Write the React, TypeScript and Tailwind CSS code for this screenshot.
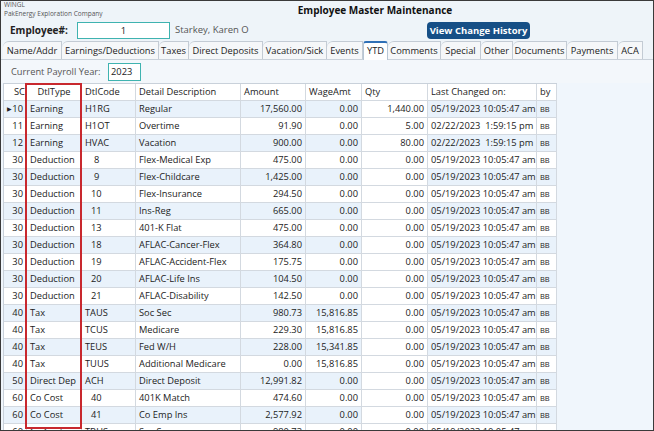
import React from "react";

type Row = {
  sc: string;
  type: string;
  code: string;
  num?: boolean;
  desc: string;
  amount: string;
  wage: string;
  qty: string;
  changed: string;
};

const d1 = "05/19/2023 10:05:47 am";
const d2 = "02/22/2023  1:59:15 pm";

const rows: Row[] = [
  { sc: "10", type: "Earning", code: "H1RG", desc: "Regular", amount: "17,560.00", wage: "0.00", qty: "1,440.00", changed: d1 },
  { sc: "11", type: "Earning", code: "H1OT", desc: "Overtime", amount: "91.90", wage: "0.00", qty: "5.00", changed: d2 },
  { sc: "12", type: "Earning", code: "HVAC", desc: "Vacation", amount: "900.00", wage: "0.00", qty: "80.00", changed: d2 },
  { sc: "30", type: "Deduction", code: "8", num: true, desc: "Flex-Medical Exp", amount: "475.00", wage: "0.00", qty: "0.00", changed: d1 },
  { sc: "30", type: "Deduction", code: "9", num: true, desc: "Flex-Childcare", amount: "1,425.00", wage: "0.00", qty: "0.00", changed: d1 },
  { sc: "30", type: "Deduction", code: "10", num: true, desc: "Flex-Insurance", amount: "294.50", wage: "0.00", qty: "0.00", changed: d1 },
  { sc: "30", type: "Deduction", code: "11", num: true, desc: "Ins-Reg", amount: "665.00", wage: "0.00", qty: "0.00", changed: d1 },
  { sc: "30", type: "Deduction", code: "13", num: true, desc: "401-K Flat", amount: "475.00", wage: "0.00", qty: "0.00", changed: d1 },
  { sc: "30", type: "Deduction", code: "18", num: true, desc: "AFLAC-Cancer-Flex", amount: "364.80", wage: "0.00", qty: "0.00", changed: d1 },
  { sc: "30", type: "Deduction", code: "19", num: true, desc: "AFLAC-Accident-Flex", amount: "175.75", wage: "0.00", qty: "0.00", changed: d1 },
  { sc: "30", type: "Deduction", code: "20", num: true, desc: "AFLAC-Life Ins", amount: "104.50", wage: "0.00", qty: "0.00", changed: d1 },
  { sc: "30", type: "Deduction", code: "21", num: true, desc: "AFLAC-Disability", amount: "142.50", wage: "0.00", qty: "0.00", changed: d1 },
  { sc: "40", type: "Tax", code: "TAUS", desc: "Soc Sec", amount: "980.73", wage: "15,816.85", qty: "0.00", changed: d1 },
  { sc: "40", type: "Tax", code: "TCUS", desc: "Medicare", amount: "229.30", wage: "15,816.85", qty: "0.00", changed: d1 },
  { sc: "40", type: "Tax", code: "TEUS", desc: "Fed W/H", amount: "228.00", wage: "15,341.85", qty: "0.00", changed: d1 },
  { sc: "40", type: "Tax", code: "TUUS", desc: "Additional Medicare", amount: "0.00", wage: "15,816.85", qty: "0.00", changed: d1 },
  { sc: "50", type: "Direct Dep", code: "ACH", desc: "Direct Deposit", amount: "12,991.82", wage: "0.00", qty: "0.00", changed: d1 },
  { sc: "60", type: "Co Cost", code: "40", num: true, desc: "401K Match", amount: "474.60", wage: "0.00", qty: "0.00", changed: d1 },
  { sc: "60", type: "Co Cost", code: "41", num: true, desc: "Co Emp Ins", amount: "2,577.92", wage: "0.00", qty: "0.00", changed: d1 },
  { sc: "60", type: "Co Cost", code: "TBUS", desc: "Soc Sec", amount: "980.73", wage: "0.00", qty: "0.00", changed: d1 },
];

const tabs = [
  { t: "Name/Addr", w: 59 },
  { t: "Earnings/Deductions", w: 97 },
  { t: "Taxes", w: 30 },
  { t: "Direct Deposits", w: 74 },
  { t: "Vacation/Sick", w: 64 },
  { t: "Events", w: 36 },
  { t: "YTD", w: 25 },
  { t: "Comments", w: 53 },
  { t: "Special", w: 40 },
  { t: "Other", w: 32 },
  { t: "Documents", w: 54 },
  { t: "Payments", w: 51 },
  { t: "ACA", w: 25 },
];

const cols = "grid grid-cols-[23px_55px_54px_105px_65px_56px_66px_109px_20px]";
const cell = "border-r border-b border-[#d3d9e0] px-[3px] whitespace-nowrap overflow-hidden";

export default function App() {
  return (
    <div
      className="w-[654px] h-[431px] overflow-hidden bg-[#eef4f9] border border-[#3a3a3a] text-[#222] flex flex-col relative whitespace-nowrap"
      style={{ fontFamily: '"Open Sans", "Noto Sans", sans-serif' }}
    >
      {/* Title */}
      <div className="h-[18px] relative shrink-0">
        <div className="absolute left-[3px] top-[-1px] text-[6.5px] leading-[9px] text-[#555]">
          <div>WINGL</div>
          <div>PakEnergy Exploration Company</div>
        </div>
        <div className="text-center pl-[96px] text-[10px] font-bold leading-[18px] text-[#111]">
          Employee Master Maintenance
        </div>
      </div>

      {/* Employee row */}
      <div className="h-[22px] flex items-center shrink-0">
        <span className="ml-[9px] text-[10px] font-bold w-[67px] shrink-0">Employee#:</span>
        <div className="w-[93px] h-[17px] shrink-0 border border-[#3fb3b0] bg-white text-[9.5px] leading-[15px] text-center">1</div>
        <span className="ml-[5px] w-[252px] shrink-0 text-[9.5px] text-[#555]">Starkey, Karen O</span>
        <button className="h-[17px] w-[103px] shrink-0 rounded-[4px] bg-[#164f86] text-white text-[9.5px] font-bold leading-[17px]">
          View Change History
        </button>
      </div>

      {/* Tabs */}
      <div className="h-[19px] flex items-end pl-[2px] shrink-0 border-b border-[#c9d1da]">
        {tabs.map(({ t, w }) => (
          <div
            key={t}
            style={{ width: w }}
            className={
              t === "YTD"
                ? "h-[19px] shrink-0 text-center bg-white border-x border-t-2 border-[#b7c6d5] border-t-[#2e6fb6] rounded-t-[3px] text-[9.3px] leading-[16px] -mb-px"
                : "h-[18px] shrink-0 text-center bg-[#f5f7f9] border-r border-t border-[#c3cbd4] rounded-tl-[6px] text-[9.3px] leading-[17px] text-[#222]"
            }
          >
            {t}
          </div>
        ))}
      </div>

      {/* Payroll year */}
      <div className="h-[23px] flex items-center shrink-0 bg-[#f3f7fb]">
        <span className="ml-[10px] text-[9.3px] text-[#555] w-[97px] shrink-0">Current Payroll Year:</span>
        <div className="w-[33px] h-[18px] shrink-0 border border-[#3fb3b0] bg-white text-[9.3px] leading-[16px] px-[2px]">2023</div>
      </div>

      {/* Grid */}
      <div className="flex-1 flex bg-[#f0f6fc] relative">
        <div className="flex flex-col text-[9.3px] leading-[16px] border-l border-t border-[#c9d1da] ml-[2px]">
          <div className={cols + " bg-white h-[17px]"}>
            <div className={cell + " px-[1px]"}>
              <span className="pl-[7px]">SC</span>
            </div>
            <div className={cell + " text-center"}>DtlType</div>
            <div className={cell}>DtlCode</div>
            <div className={cell}>Detail Description</div>
            <div className={cell}>Amount</div>
            <div className={cell}>WageAmt</div>
            <div className={cell}>Qty</div>
            <div className={cell}>Last Changed on:</div>
            <div className={cell}>by</div>
          </div>
          {rows.map((r, i) => {
            const bg = i % 2 === 0 ? "bg-[#e9f2fb]" : "bg-white";
            return (
              <div key={i} className={cols + " h-[17px]"}>
                <div className={cell + " " + bg + " flex items-center px-0"}>
                  <span className="w-[9px] text-[6px] text-[#222] text-center">{i === 0 ? "▶" : ""}</span>
                  <span className="w-[12px] text-right">{r.sc}</span>
                </div>
                <div className={cell + " " + bg + " px-[2px]"}>{r.type}</div>
                <div className={cell + " " + bg + (r.num ? (r.code.length === 1 ? " pl-[12px]" : " pl-[9px]") : "")}>
                  {r.code}
                </div>
                <div className={cell + " " + bg}>{r.desc}</div>
                <div className={cell + " " + bg + " text-right"}>{r.amount}</div>
                <div className={cell + " " + bg + " text-right"}>{r.wage}</div>
                <div className={cell + " bg-white text-right"}>{r.qty}</div>
                <div className={cell + " " + bg + " whitespace-pre"}>{r.changed}</div>
                <div className={cell + " " + bg + " text-[7.5px] px-[2px]"}>BB</div>
              </div>
            );
          })}
        </div>
        {/* highlight box */}
        <div className="absolute left-[24px] top-0 w-[57px] h-[346px] border-2 border-[#c8282e] pointer-events-none" />
      </div>
    </div>
  );
}
